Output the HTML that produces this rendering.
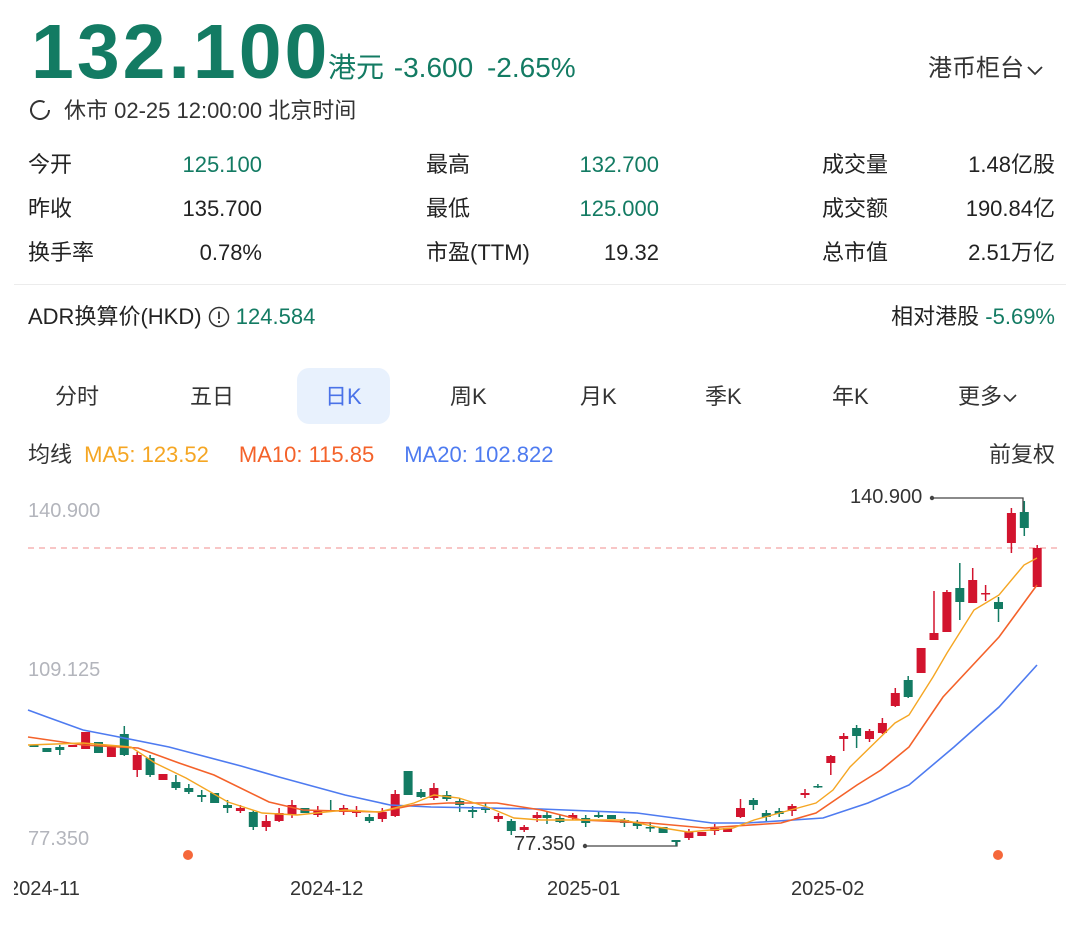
<!DOCTYPE html>
<html><head><meta charset="utf-8"><style>
body{margin:0;width:1080px;height:926px;background:#fff;font-family:"Liberation Sans","Noto Sans CJK SC",sans-serif;color:#222;position:relative;overflow:hidden}
.a{position:absolute;white-space:nowrap}
.g{color:#137b63}
.s{font-size:22px;line-height:26px}
.r{text-align:right}
</style></head><body>
<div class="a g" style="left:31px;top:8px;font-size:77px;font-weight:bold;letter-spacing:3px;line-height:88px">132.100</div>
<div class="a g" style="left:328px;top:51px;font-size:28px;line-height:34px">港元 <span style="margin-left:2px">-3.600</span> <span style="margin-left:6px">-2.65%</span></div>
<div class="a" style="left:928px;top:54px;font-size:24px;line-height:30px;color:#333">港币柜台<svg width="18" height="12" viewBox="0 0 18 12" style="margin-left:2px"><path d="M2 3l7 7 7-7" fill="none" stroke="#333" stroke-width="1.8"/></svg></div>
<svg class="a" style="left:29px;top:99px" width="22" height="22" viewBox="0 0 22 22"><path d="M15.5 3.2A9 9 0 1 0 20 11" fill="none" stroke="#333" stroke-width="2"/></svg>
<div class="a s" style="left:64px;top:98px;color:#333">休市 02-25 12:00:00 北京时间</div>

<div class="a s" style="left:28px;top:152px">今开</div><div class="a s g r" style="right:818px;top:152px">125.100</div>
<div class="a s" style="left:28px;top:196px">昨收</div><div class="a s r" style="right:818px;top:196px">135.700</div>
<div class="a s" style="left:28px;top:240px">换手率</div><div class="a s r" style="right:818px;top:240px">0.78%</div>
<div class="a s" style="left:426px;top:152px">最高</div><div class="a s g r" style="right:421px;top:152px">132.700</div>
<div class="a s" style="left:426px;top:196px">最低</div><div class="a s g r" style="right:421px;top:196px">125.000</div>
<div class="a s" style="left:426px;top:240px">市盈(TTM)</div><div class="a s r" style="right:421px;top:240px">19.32</div>
<div class="a s" style="left:822px;top:152px">成交量</div><div class="a s r" style="right:25px;top:152px">1.48亿股</div>
<div class="a s" style="left:822px;top:196px">成交额</div><div class="a s r" style="right:25px;top:196px">190.84亿</div>
<div class="a s" style="left:822px;top:240px">总市值</div><div class="a s r" style="right:25px;top:240px">2.51万亿</div>
<div class="a" style="left:14px;top:284px;width:1052px;height:1px;background:#ececec"></div>

<div class="a s" style="left:28px;top:304px">ADR换算价(HKD) <svg width="22" height="22" viewBox="0 0 22 22" style="vertical-align:-4px"><circle cx="11" cy="11" r="9.5" fill="none" stroke="#333" stroke-width="1.5"/><path d="M11 5.5v7.5M11 15v2" stroke="#333" stroke-width="1.8"/></svg> <span class="g">124.584</span></div>
<div class="a s r" style="right:25px;top:304px">相对港股 <span class="g">-5.69%</span></div>

<div class="a" style="left:297px;top:368px;width:93px;height:56px;background:#e8f1fd;border-radius:12px"></div>
<div class="a s" style="left:55px;top:384px;color:#333">分时</div>
<div class="a s" style="left:190px;top:384px;color:#333">五日</div>
<div class="a s" style="left:325px;top:384px;color:#4a72e8">日K</div>
<div class="a s" style="left:450px;top:384px;color:#333">周K</div>
<div class="a s" style="left:580px;top:384px;color:#333">月K</div>
<div class="a s" style="left:705px;top:384px;color:#333">季K</div>
<div class="a s" style="left:832px;top:384px;color:#333">年K</div>
<div class="a s" style="left:958px;top:384px;color:#333">更多<svg width="16" height="12" viewBox="0 0 16 12"><path d="M2 3l6 6 6-6" fill="none" stroke="#333" stroke-width="1.6"/></svg></div>

<div class="a s" style="left:28px;top:442px;color:#333">均线 <span style="color:#f5a623;margin-left:6px">MA5: 123.52</span><span style="color:#f4622a;margin-left:30px">MA10: 115.85</span><span style="color:#4e7bf0;margin-left:30px">MA20: 102.822</span></div>
<div class="a s r" style="right:25px;top:442px;color:#333">前复权</div>

<div class="a" style="left:28px;top:500px;font-size:20px;color:#b3b5bc">140.900</div>
<div class="a" style="left:28px;top:659px;font-size:20px;color:#b3b5bc">109.125</div>
<div class="a" style="left:28px;top:828px;font-size:20px;color:#b3b5bc">77.350</div>
<div class="a" style="left:14px;top:878px;font-size:20px;color:#333;width:90px;overflow:hidden"><span style="margin-left:-6px">2024-11</span></div>
<div class="a" style="left:290px;top:878px;font-size:20px;color:#333">2024-12</div>
<div class="a" style="left:547px;top:878px;font-size:20px;color:#333">2025-01</div>
<div class="a" style="left:791px;top:878px;font-size:20px;color:#333">2025-02</div>
<div class="a" style="left:850px;top:486px;font-size:20px;color:#333">140.900</div>
<div class="a" style="left:514px;top:833px;font-size:20px;color:#333">77.350</div>

<svg class="a" style="left:0;top:0" width="1080" height="926" viewBox="0 0 1080 926">
<line x1="28" y1="548" x2="1058" y2="548" stroke="#f4a3a3" stroke-width="1.3" stroke-dasharray="6,5"/>
<path d="M932 498H1023V512M585 846H677V840" fill="none" stroke="#444" stroke-width="1.3"/>
<circle cx="932" cy="498" r="2.2" fill="#444"/><circle cx="585" cy="846" r="2.2" fill="#444"/>
<circle cx="188" cy="855" r="5" fill="#f5673a"/><circle cx="998" cy="855" r="5" fill="#f5673a"/>
<g id="c"></g>
<polyline fill="none" stroke="#4e7bf0" stroke-width="1.6" points="28,710 47,717 83,730 114,736 169,747 241,766 279,777 345,795 390,805 431,807 541,809 637,813 712,823 747,823 823,818 868,803 909,785 954,747 999,707 1037,665"/>
<polyline fill="none" stroke="#f4622a" stroke-width="1.6" points="28,737 83,745 138,748 179,763 214,775 269,802 303,810 379,812 414,805 448,803 497,803 541,810 581,820 650,823 705,828 781,823 816,813 857,785 881,770 909,747 943,697 999,637 1037,585"/>
<polyline fill="none" stroke="#f5a623" stroke-width="1.4" points="28,745 83,743 131,747 155,763 186,778 228,802 262,813 297,815 345,810 379,812 414,803 434,795 459,798 490,808 514,818 541,820 581,820 623,820 657,827 688,832 733,828 754,820 816,803 833,790 850,767 895,723 909,715 933,677 947,653 974,610 999,595 1024,565 1037,558"/>
</svg>
<script>
var d=[
[745,747,'g'],[748,752,'g'],[747,750,'g',745,755],[745,747,'r'],[732,749,'r'],[742,753,'g'],[747,757,'r'],[734,755,'g',726,756],[755,770,'r',752,777],[758,775,'g',755,777],[774,780,'r'],[782,788,'g',775,790],[788,792,'g',784,794],[795,797,'g',790,802],[793,803,'g'],[805,808,'g',800,813],[808,811,'r',805,813],[812,827,'g',810,830],[821,827,'r',815,831],[813,821,'r',808,822],[805,815,'r',800,818],[808,813,'g'],[811,815,'r',806,817],[810,811,'g',800,811],[808,812,'r',805,815],[811,813,'r',806,817],[817,821,'g',814,823],[812,819,'r',808,822],[794,816,'r',790,817],[771,795,'g'],[792,797,'g',789,798],[788,798,'r',783,800],[795,799,'g',791,801],[801,805,'g',798,812],[810,812,'g',806,818],[807,810,'g',803,813],[816,819,'r',813,822],[821,831,'g',819,835],[827,830,'r',825,832],[815,818,'r',812,822],
[815,818,'g',812,824],[818,822,'g',815,823],[815,818,'r',813,820],[818,823,'g',815,827],[815,817,'g',812,818],[815,819,'g'],[820,823,'g',818,827],[822,826,'g',820,829],[827,828,'g',822,832],[827,833,'g'],[840,842,'g',840,846],[832,838,'r',829,840],[832,836,'r'],[828,831,'r',824,835],[828,832,'r'],[808,817,'r',799,818],[800,805,'g',798,810],[813,817,'g',810,822],[811,814,'g',808,817],[806,811,'r',804,816],[793,795,'r',789,798],[786,787,'g',784,788],[756,763,'r',755,775],[736,739,'r',733,751],[728,736,'g',725,748],[731,739,'r',729,742],[723,733,'r',718,734],[693,706,'r',688,707],[680,697,'g',676,698],[648,673,'r'],[633,640,'r',591,640],[592,632,'r',590,632],[588,602,'g',563,620],[580,603,'r',568,603],[593,594,'r',585,601],[602,609,'g',597,622],[513,543,'r',508,553],[512,528,'g',501,536],[548,587,'r',545,587]];
var s='';d.forEach(function(c,i){var x=i<40?34+i*12.9:547+(i-40)*12.9;var col=c[2]=='g'?'#137b63':'#d2142e';var t=c[3]||c[0],b=c[4]||c[1];
s+='<line x1="'+x+'" y1="'+t+'" x2="'+x+'" y2="'+b+'" stroke="'+col+'" stroke-width="1.5"/>';
var h=Math.max(c[1]-c[0],1.5);s+='<rect x="'+(x-4.5)+'" y="'+c[0]+'" width="9" height="'+h+'" fill="'+col+'"/>';});
document.getElementById('c').innerHTML=s;
</script>
</body></html>
